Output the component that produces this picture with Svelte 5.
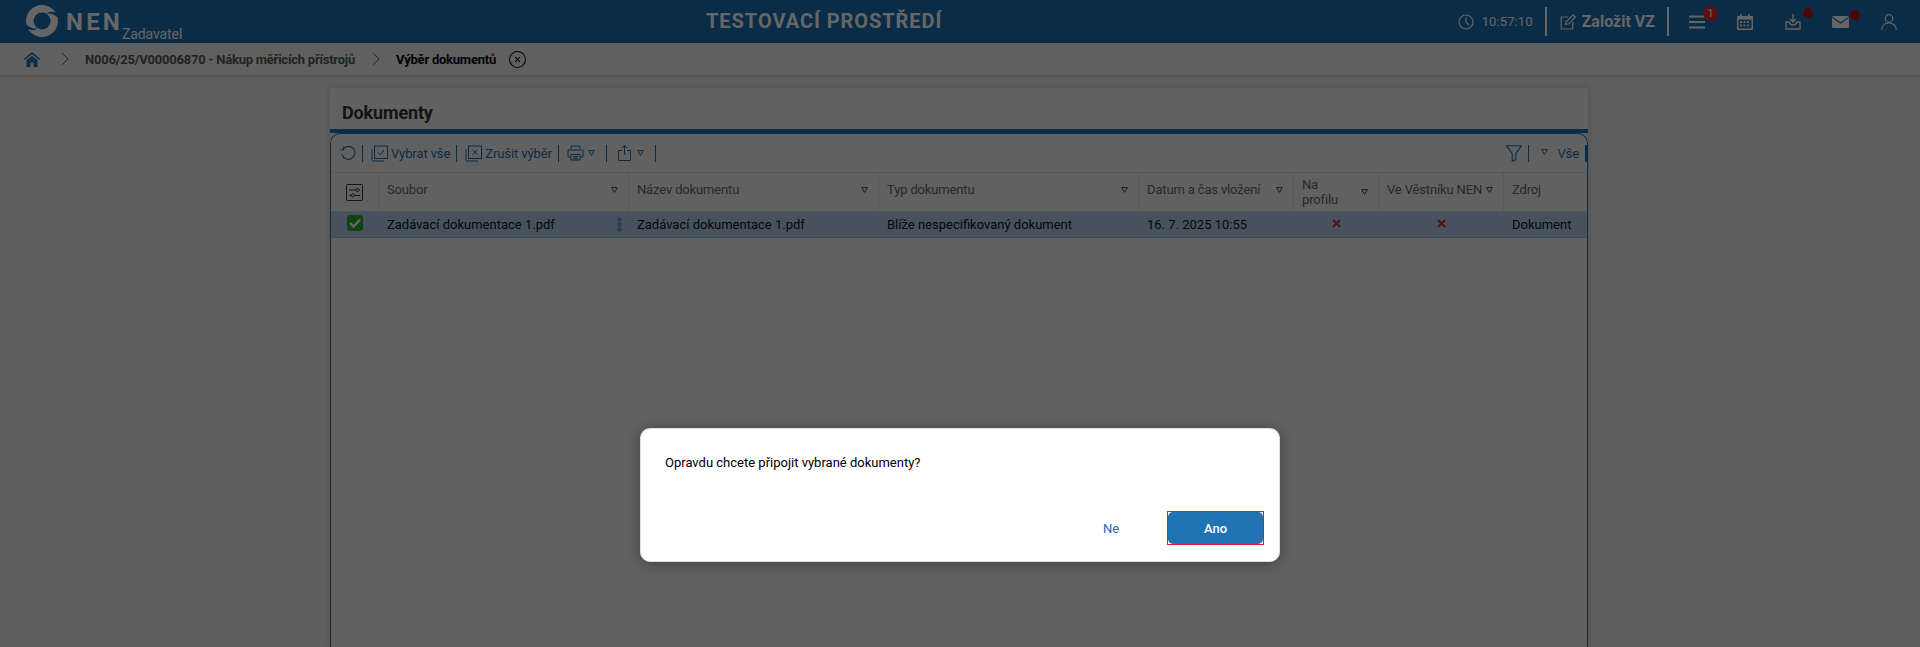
<script lang="ts">
	const columns = [
		{ label: 'Soubor', filter: true },
		{ label: 'Název dokumentu', filter: true },
		{ label: 'Typ dokumentu', filter: true },
		{ label: 'Datum a čas vložení', filter: true },
		{ label: 'Na profilu', filter: true },
		{ label: 'Ve Věstníku NEN', filter: true },
		{ label: 'Zdroj', filter: false }
	];
</script>

<div class="page">
	<header class="topbar">
		<div class="logo">
			<svg class="ring" viewBox="0 0 32 32" width="32" height="32">
				<path fill="#fff" fill-rule="evenodd" d="M16 0a16 16 0 1 1 0 32 16 16 0 0 1 0-32ZM16 7.500a8.500 8.500 0 1 0 0 17 8.500 8.500 0 0 0 0-17Z" />
				<path fill="#1a6eb1" d="M20 8.800C24 7.800 28 9 32.500 13L32.500 9.500C28 6 23.500 6 20 8.800Z" />
				<path fill="#1a6eb1" d="M20 8.800C24 7.800 28 9 32.500 13L32.500 9.500C28 6 23.500 6 20 8.800Z" transform="rotate(180 16 16)" />
			</svg>
			<span class="nen">NEN</span>
			<span class="role">Zadavatel</span>
		</div>
		<div class="env">TESTOVACÍ PROSTŘEDÍ</div>
		<div class="tools">
			<svg class="clock" viewBox="0 0 16 16" width="16" height="16" fill="none" stroke="#fff" stroke-width="1.200">
				<circle cx="8" cy="8" r="7" />
				<path d="M8 3.600V8l3 3" />
			</svg>
			<span class="time">10:57:10</span>
			<i class="vsep first"></i>
			<svg class="edit" viewBox="0 0 16 16" width="16" height="16" fill="none" stroke="#fff" stroke-width="1.200">
				<path d="M8 3H1.200v12h11.600V8" />
				<path d="M5.800 10.500l.6-3L13 .9l2.200 2.200-6.500 6.700Z" />
			</svg>
			<span class="create">Založit VZ</span>
			<i class="vsep second"></i>
			<div class="icon menu">
				<svg viewBox="0 0 16 14" width="16" height="14" fill="none" stroke="#fff" stroke-width="1.800">
					<path d="M0 1.500h16M0 7h16M0 12.500h16" />
				</svg>
				<span class="badge">1</span>
			</div>
			<div class="icon calendar">
				<svg viewBox="0 0 16 16" width="16" height="16" fill="#fff">
					<path d="M3 0h1.500v2H11V0h1.500v2H15a1 1 0 0 1 1 1v12a1 1 0 0 1-1 1H1a1 1 0 0 1-1-1V3a1 1 0 0 1 1-1h2Z" />
					<path fill="#1a6eb1" d="M1.500 5.500h13v9h-13Z" />
					<path d="M3 7h2v2H3Zm3.500 0h1.800v2H6.500ZM10 7h1.800v2H10ZM3 10.500h2v2H3Zm3.500 0h1.800v2H6.500Zm3.500 0h1.800v2H10Z" />
				</svg>
			</div>
			<div class="icon download">
				<svg viewBox="0 0 16 16" width="16" height="16" fill="none" stroke="#fff" stroke-width="1.300">
					<path d="M8 0v7.500M5 5l3 3 3-3" />
					<path d="M4 8H1v7h14V8h-3c-.8 2.500-2.200 3-4 3s-3.200-.5-4-3Z" />
				</svg>
				<i class="dot"></i>
			</div>
			<div class="icon mail">
				<svg viewBox="0 0 17 12" width="17" height="12">
					<rect width="17" height="12" rx="1.500" fill="#fff" />
					<path d="M.5 1.500l8 5.500 8-5.500" fill="none" stroke="#1a6eb1" stroke-width="1.100" />
				</svg>
				<i class="dot"></i>
			</div>
			<div class="icon user">
				<svg viewBox="0 0 16 16" width="16" height="16" fill="none" stroke="#fff" stroke-width="1.200">
					<circle cx="8" cy="4.500" r="3.800" />
					<path d="M.8 16c0-4 2.600-7 7.200-7s7.200 3 7.200 7" />
				</svg>
			</div>
		</div>
	</header>

	<nav class="crumbs">
		<svg class="home" viewBox="0 0 16 15" width="16" height="15" fill="#1a6eb1">
			<path d="M8 0l8 6.800-.9 1.100L8 2 .9 7.900 0 6.800Z" />
			<path d="M8 3.700l5.500 4.600V15H9.700v-4.500H6.300V15H2.500V8.300Z" />
		</svg>
		<svg class="chev" viewBox="0 0 8 14" width="8" height="14" fill="none" stroke="#666" stroke-width="1">
			<path d="M1 1l6 6-6 6" />
		</svg>
		<span class="crumb">N006/25/V00006870 - Nákup měřicích přístrojů</span>
		<svg class="chev" viewBox="0 0 8 14" width="8" height="14" fill="none" stroke="#666" stroke-width="1">
			<path d="M1 1l6 6-6 6" />
		</svg>
		<span class="crumb current">Výběr dokumentů</span>
		<svg class="close" viewBox="0 0 16 16" width="17" height="17" fill="none" stroke="#111" stroke-width="1">
			<circle cx="8" cy="8" r="7.500" />
			<path d="M5.800 5.800l4.400 4.400M10.200 5.800l-4.400 4.400" />
		</svg>
	</nav>

	<main class="content">
		<section class="panel">
			<h1>Dokumenty</h1>
			<div class="frame">
				<div class="toolbar">
					<svg class="tb-refresh" viewBox="0 0 16 15" width="16" height="15" fill="none" stroke="#1a6eb1" stroke-width="1.100">
						<path d="M3 3.200A6.500 6.500 0 1 1 2.100 8.500" />
						<path d="M3 .5v3h-3" transform="translate(.5 .2)" />
					</svg>
					<i class="sep"></i>
					<svg class="tb-doc" viewBox="0 0 17 17" width="17" height="17" fill="none" stroke="#1a6eb1" stroke-width="1">
						<path d="M1 4v11a1 1 0 0 0 1 1h11" />
						<rect x="3.500" y="1" width="13" height="12.500" />
						<path d="M7 7.500l2.200 2.200L13 5" />
					</svg>
					<span class="tb-text">Vybrat vše</span>
					<i class="sep"></i>
					<svg class="tb-doc" viewBox="0 0 17 17" width="17" height="17" fill="none" stroke="#1a6eb1" stroke-width="1">
						<path d="M1 4v11a1 1 0 0 0 1 1h11" />
						<rect x="3.500" y="1" width="13" height="12.500" />
						<path d="M7.500 4.700l5 5M12.500 4.700l-5 5" />
					</svg>
					<span class="tb-text">Zrušit výběr</span>
					<i class="sep"></i>
					<svg class="tb-doc" viewBox="0 0 17 16" width="17" height="16" fill="none" stroke="#1a6eb1" stroke-width="1">
						<path d="M4 4V1h9v3" />
						<path d="M4 12H1V5h15v7h-3" />
						<path d="M4 9.500h9V15H4ZM6 11.500h5M6 13.300h5" />
					</svg>
					<svg class="tri blue" viewBox="0 0 7 6" width="7" height="6"><path d="M.6.600h5.800L3.500 5.400Z" /></svg>
					<i class="sep"></i>
					<svg class="tb-share" viewBox="0 0 13 16" width="13" height="16" fill="none" stroke="#1a6eb1" stroke-width="1">
						<path d="M4 5.500H.5v10h12v-10H9" />
						<path d="M6.500 10V.8M4 3l2.500-2.500L9 3" />
					</svg>
					<svg class="tri blue" viewBox="0 0 7 6" width="7" height="6"><path d="M.6.600h5.800L3.500 5.400Z" /></svg>
					<i class="sep"></i>
					<svg class="tb-filter" viewBox="0 0 16 17" width="16" height="17" fill="none" stroke="#1a6eb1" stroke-width="1.100">
						<path d="M.6.800h14.800L9.800 8.500v6.300l-3.600 1.500V8.500Z" />
					</svg>
					<i class="sep"></i>
					<svg class="tri blue all" viewBox="0 0 7 6" width="7" height="6"><path d="M.6.600h5.800L3.500 5.400Z" /></svg>
					<span class="tb-text all-text">Vše</span>
					<i class="end"></i>
				</div>

				<div class="grid head">
					<div class="cell tick">
						<svg viewBox="0 0 17 17" width="17" height="17" fill="none" stroke="#333" stroke-width="1">
							<rect x=".5" y=".5" width="16" height="16" rx="1" />
							<path d="M3 6h7M13 6h1M3 11.500h2M8 11.500h6" />
							<circle cx="11.500" cy="6" r="1.500" />
							<circle cx="6.500" cy="11.500" r="1.500" />
						</svg>
					</div>
					{#each columns as col}
						<div class="cell" class:two-line={col.label === 'Na profilu'}>
							<span class="label">{col.label}</span>
							{#if col.filter}
								<svg class="tri" viewBox="0 0 7 6" width="7" height="6"><path d="M.6.600h5.800L3.500 5.400Z" /></svg>
							{/if}
						</div>
					{/each}
				</div>

				<div class="grid row">
					<div class="cell tick">
						<span class="check">
							<svg viewBox="0 0 12 10" width="12" height="10" fill="none" stroke="#fff" stroke-width="2.400">
								<path d="M1 5l3.500 3.500L11 1.500" />
							</svg>
						</span>
					</div>
					<div class="cell">
						<span>Zadávací dokumentace 1.pdf</span>
						<svg class="kebab" viewBox="0 0 5 15" width="5" height="15" fill="none" stroke="#1a6eb1" stroke-width="1">
							<circle cx="2.500" cy="2.500" r="1.500" />
							<circle cx="2.500" cy="7.500" r="1.500" />
							<circle cx="2.500" cy="12.500" r="1.500" />
						</svg>
					</div>
					<div class="cell"><span>Zadávací dokumentace 1.pdf</span></div>
					<div class="cell"><span>Blíže nespecifikovaný dokument</span></div>
					<div class="cell"><span>16. 7. 2025 10:55</span></div>
					<div class="cell mid"><svg class="no" viewBox="0 0 9 9" width="9" height="9" stroke="#d8232a" stroke-width="2"><path d="M1 1l7 7M8 1l-7 7" /></svg></div>
					<div class="cell mid"><svg class="no" viewBox="0 0 9 9" width="9" height="9" stroke="#d8232a" stroke-width="2"><path d="M1 1l7 7M8 1l-7 7" /></svg></div>
					<div class="cell"><span>Dokument</span></div>
				</div>
			</div>
		</section>
	</main>

	<div class="overlay">
		<div class="dialog" role="dialog" aria-modal="true">
			<p>Opravdu chcete připojit vybrané dokumenty?</p>
			<div class="actions">
				<button class="ghost">Ne</button>
				<span class="focus"><button class="primary">Ano</button></span>
			</div>
		</div>
	</div>
</div>

<style>
	:global(body) {
		margin: 0;
		background: #efefef;
		font-family: Roboto, 'Liberation Sans', sans-serif;
	}
	.page {
		position: relative;
		height: 647px;
		overflow: hidden;
		display: flex;
		flex-direction: column;
		color: #222;
	}
	.topbar {
		height: 43px;
		flex: none;
		display: flex;
		align-items: center;
		background: #1a6eb1;
		color: #fff;
		position: relative;
	}
	.logo {
		display: flex;
		align-items: flex-start;
		height: 43px;
		padding-left: 26px;
	}
	.ring {
		margin-top: 5px;
	}
	.nen {
		font-size: 24px;
		font-weight: 700;
		letter-spacing: 3.2px;
		line-height: 28px;
		margin: 8px 0 0 8px;
	}
	.role {
		font-size: 14px;
		letter-spacing: -0.1px;
		line-height: 16px;
		margin: 26px 0 0 -1px;
		font-weight: 400;
	}
	.env {
		position: absolute;
		left: 706px;
		top: 10px;
		font-size: 20px;
		line-height: 23px;
		font-weight: 700;
		letter-spacing: 0.95px;
	}
	.tools {
		margin-left: auto;
		display: flex;
		align-items: center;
		height: 43px;
		padding-right: 23px;
	}
	.time {
		font-size: 13px;
		letter-spacing: 0.1px;
		margin-left: 8px;
	}
	.vsep {
		width: 2px;
		height: 29px;
		background: #fff;
	}
	.vsep.first {
		margin: 0 13px 0 12px;
	}
	.create {
		font-size: 16px;
		font-weight: 700;
		margin-left: 6px;
	}
	.vsep.second {
		margin: 0 20px 0 12px;
	}
	.icon {
		position: relative;
		display: flex;
		align-items: center;
	}
	.icon.menu {
		margin-right: 32px;
	}
	.icon.calendar {
		margin-right: 32px;
	}
	.icon.download {
		margin-right: 31px;
	}
	.icon.mail {
		margin-right: 32px;
	}
	.badge {
		position: absolute;
		left: 14px;
		top: -9px;
		width: 15px;
		height: 15px;
		border-radius: 50%;
		background: #e02b2b;
		font-size: 11px;
		line-height: 15px;
		text-align: center;
	}
	.dot {
		position: absolute;
		left: 18px;
		top: -6px;
		width: 10px;
		height: 10px;
		border-radius: 50%;
		background: #c00f14;
	}
	.crumbs {
		height: 32px;
		flex: none;
		display: flex;
		align-items: center;
		background: #f1f1f1;
		box-shadow: 0 1px 3px rgba(0, 0, 0, 0.2);
		padding-left: 24px;
		position: relative;
	}
	.home {
		margin-right: 21px;
	}
	.chev {
		margin-right: 16px;
	}
	.crumb {
		font-size: 13px;
		font-weight: 700;
		color: #555;
		letter-spacing: -0.23px;
		margin-right: 17px;
	}
	.crumb.current {
		color: #000;
		margin-right: 13px;
	}
	.content {
		flex: 1;
		min-height: 0;
		display: flex;
		justify-content: center;
		padding-top: 13px;
		background: #ebebeb;
	}
	.panel {
		width: 1258px;
		margin-left: -2px;
		background: #f2f2f2;
		box-shadow: 0 0 6px rgba(0, 0, 0, 0.15);
		display: flex;
		flex-direction: column;
	}
	h1 {
		margin: 0;
		height: 45px;
		flex: none;
		box-sizing: border-box;
		padding: 14px 0 0 12px;
		font-size: 18px;
		line-height: 21px;
		font-weight: 700;
		letter-spacing: -0.15px;
		color: #333;
		border-bottom: 4px solid #1a6eb1;
	}
	.frame {
		flex: 1;
		border: 1px solid #1a6eb1;
		border-bottom: 0;
		border-radius: 10px 10px 0 0;
	}
	.toolbar {
		height: 38px;
		display: flex;
		align-items: center;
		padding-left: 9px;
		color: #1a6eb1;
	}
	.tb-text {
		font-size: 13px;
		margin-left: 3px;
		margin-top: 1px;
		letter-spacing: -0.1px;
	}
	.sep {
		width: 1px;
		height: 17px;
		background: #1a6eb1;
		margin: 0 8px 0 6px;
	}
	.tri {
		fill: none;
		stroke: #444;
		stroke-width: 1;
		flex: none;
	}
	.tri.blue {
		stroke: #1a6eb1;
		margin-left: 4px;
		margin-right: 5px;
	}
	.tb-share {
		margin-left: 3px;
	}
	.tb-share + .tri.blue {
		margin-left: 6px;
		margin-right: 5px;
	}
	.tb-filter {
		margin-left: auto;
	}
	.tri.all {
		margin: -2px 0 0 4px;
	}
	.all-text {
		margin-left: 9px;
		margin-right: 6px;
	}
	.end {
		width: 2px;
		height: 17px;
		background: #1a6eb1;
	}
	.grid {
		display: grid;
		grid-template-columns: 48px 250px 250px 260px 155px 85px 125px 83px;
		font-size: 13px;
	}
	.head {
		height: 40px;
		color: #666;
		border-top: 1px solid #ddd;
		box-sizing: border-box;
		background: #f2f2f2;
	}
	.head .label {
		letter-spacing: -0.15px;
	}
	.head .cell {
		border-right: 1px solid #ddd;
		border-bottom: 1px solid #d5d5d5;
		padding-bottom: 5px;
		padding-right: 10px;
	}
	.head .cell:last-child {
		border-right: 0;
	}
	.head .cell.tick,
	.head .cell.two-line {
		padding-bottom: 0;
	}
	.head .cell.tick {
		padding-right: 0;
	}
	.two-line .label {
		white-space: normal;
		width: 40px;
		line-height: 15px;
	}
	.cell {
		display: flex;
		align-items: center;
		justify-content: space-between;
		padding: 0 8px;
		box-sizing: border-box;
		min-width: 0;
		white-space: nowrap;
	}
	.cell.tick {
		justify-content: center;
		padding: 0;
	}
	.cell.mid {
		justify-content: center;
	}
	.row {
		height: 26px;
		background: #b4cdec;
		color: #111;
		border-bottom: 1px solid #9ab8d8;
		box-sizing: border-box;
	}
	.row .no {
		margin-top: -3px;
	}
	.kebab {
		margin-right: -1px;
	}
	.check {
		width: 16px;
		height: 16px;
		border-radius: 3px;
		background: #2ea836;
		display: flex;
		align-items: center;
		justify-content: center;
		margin-top: -3px;
	}
	.overlay {
		position: absolute;
		inset: 0;
		background: rgba(0, 0, 0, 0.6);
	}
	.dialog {
		position: absolute;
		left: 640px;
		top: 428px;
		width: 640px;
		height: 134px;
		box-sizing: border-box;
		background: #fff;
		border-radius: 10px;
		box-shadow: 0 2px 14px rgba(0, 0, 0, 0.35);
		border: 1px solid #ddd;
		padding: 0 15px 16px 24px;
		display: flex;
		flex-direction: column;
		justify-content: space-between;
	}
	.dialog p {
		margin: 26px 0 0;
		font-size: 13px;
		line-height: 16px;
		color: #000;
	}
	.actions {
		display: flex;
		justify-content: flex-end;
		align-items: center;
	}
	button {
		font: inherit;
		font-size: 13px;
		cursor: pointer;
	}
	.ghost {
		border: 0;
		background: none;
		color: #1a6eb1;
		width: 96px;
		margin-right: 8px;
		height: 34px;
	}
	.focus {
		display: block;
		border: 1px solid #e0192a;
		height: 32px;
	}
	.primary {
		display: block;
		width: 95px;
		height: 32px;
		background: #1f74b3;
		color: #fff;
		border: 0;
		border-radius: 5px;
		font-weight: 500;
	}
</style>
